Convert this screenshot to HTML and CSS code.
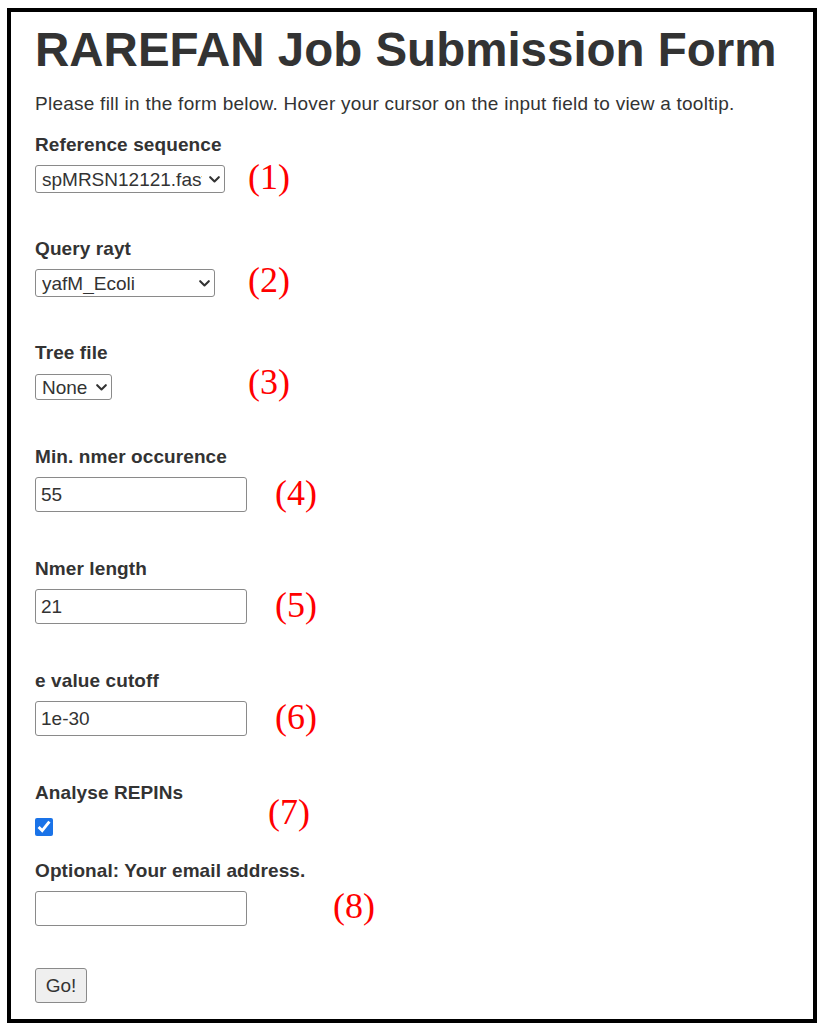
FILE: index.html
```html
<!DOCTYPE html>
<html lang="en">
<head>
<meta charset="utf-8">
<title>RAREFAN Job Submission Form</title>
<link rel="stylesheet" href="styles.css">
</head>
<body>
<div class="frame">
  <h1 class="title">RAREFAN Job Submission Form</h1>
  <p class="intro">Please fill in the form below. Hover your cursor on the input field to view a tooltip.</p>
  <form class="form">
    <div class="field field-select">
      <label class="label">Reference sequence</label>
      <div class="row">
        <span class="select-wrap select-ref">
          <select class="select"><option>spMRSN12121.fasta</option></select>
          <svg class="chev" width="11" height="7" viewBox="0 0 11 7"><path d="M1.2 1.2 L5.5 5.4 L9.8 1.2" fill="none" stroke="#333" stroke-width="2.1" stroke-linecap="round" stroke-linejoin="round"/></svg>
        </span>
        <span class="note note-1">(1)</span>
      </div>
    </div>
    <div class="field field-select">
      <label class="label">Query rayt</label>
      <div class="row">
        <span class="select-wrap select-query">
          <select class="select"><option>yafM_Ecoli</option></select>
          <svg class="chev" width="11" height="7" viewBox="0 0 11 7"><path d="M1.2 1.2 L5.5 5.4 L9.8 1.2" fill="none" stroke="#333" stroke-width="2.1" stroke-linecap="round" stroke-linejoin="round"/></svg>
        </span>
        <span class="note note-2">(2)</span>
      </div>
    </div>
    <div class="field field-select">
      <label class="label">Tree file</label>
      <div class="row">
        <span class="select-wrap select-tree">
          <select class="select"><option>None</option></select>
          <svg class="chev" width="11" height="7" viewBox="0 0 11 7"><path d="M1.2 1.2 L5.5 5.4 L9.8 1.2" fill="none" stroke="#333" stroke-width="2.1" stroke-linecap="round" stroke-linejoin="round"/></svg>
        </span>
        <span class="note note-3">(3)</span>
      </div>
    </div>
    <div class="field field-input">
      <label class="label">Min. nmer occurence</label>
      <div class="row row-input">
        <input class="text" type="text" value="55">
        <span class="note note-4">(4)</span>
      </div>
    </div>
    <div class="field field-input">
      <label class="label">Nmer length</label>
      <div class="row row-input">
        <input class="text" type="text" value="21">
        <span class="note note-5">(5)</span>
      </div>
    </div>
    <div class="field field-input">
      <label class="label">e value cutoff</label>
      <div class="row row-input">
        <input class="text" type="text" value="1e-30">
        <span class="note note-6">(6)</span>
      </div>
    </div>
    <div class="field field-check">
      <label class="label">Analyse REPINs</label>
      <div class="row row-check">
        <input class="check" type="checkbox" checked>
        <span class="note note-7">(7)</span>
      </div>
    </div>
    <div class="field field-email">
      <label class="label">Optional: Your email address.</label>
      <div class="row row-input">
        <input class="text" type="text" value="">
        <span class="note note-8">(8)</span>
      </div>
    </div>
    <button class="go" type="button">Go!</button>
  </form>
</div>
</body>
</html>
```

FILE: styles.css
```css
html, body {
  margin: 0;
  padding: 0;
  background: #ffffff;
}

body {
  font-family: "Liberation Sans", Arial, Helvetica, sans-serif;
  color: #333333;
}

.frame {
  box-sizing: border-box;
  margin: 8px 0 0 7px;
  width: 810px;
  height: 1015px;
  border: 4px solid #000000;
  padding: 11px 0 0 24px;
}

.title {
  margin: 0;
  font-size: 47.5px;
  line-height: 54px;
  font-weight: bold;
  color: #333333;
}

.intro {
  margin: 16px 0 0 0;
  font-size: 19px;
  line-height: 22px;
  letter-spacing: 0.25px;
}

.form {
  display: flex;
  flex-direction: column;
  align-items: flex-start;
  margin-top: 19px;
}

.field {
  display: flex;
  flex-direction: column;
  align-items: flex-start;
}

.field-select { margin-bottom: 45px; }
.field-input { margin-bottom: 46px; }
.field-check { margin-bottom: 24px; }
.field-email { margin-bottom: 42px; }

.label {
  display: block;
  font-size: 19px;
  line-height: 22px;
  font-weight: bold;
  letter-spacing: 0.1px;
  color: #333333;
  margin-bottom: 9px;
}

.row {
  display: flex;
  align-items: center;
  height: 28px;
}

.row-input { height: 35px; }
.row-check { height: 18px; margin-top: 5px; }

.select-wrap {
  position: relative;
  display: inline-flex;
  height: 28px;
}

.select {
  box-sizing: border-box;
  width: 100%;
  height: 100%;
  margin: 0;
  padding: 0 22px 0 6px;
  -webkit-appearance: none;
  appearance: none;
  font-family: "Liberation Sans", Arial, Helvetica, sans-serif;
  font-size: 19px;
  color: #333333;
  background: #ffffff;
  border: 1px solid #8a8a8a;
  border-radius: 3px;
}

.chev {
  position: absolute;
  right: 5px;
  top: 50%;
  margin-top: -3px;
  pointer-events: none;
}

.select-ref { width: 190px; }
.select-query { width: 180px; }
.select-tree { width: 77px; height: 26px; }

.text {
  box-sizing: border-box;
  width: 212px;
  height: 35px;
  margin: 0;
  padding: 0 5px;
  font-family: "Liberation Sans", Arial, Helvetica, sans-serif;
  font-size: 19px;
  color: #333333;
  background: #ffffff;
  border: 1px solid #8a8a8a;
  border-radius: 3px;
}

.check {
  width: 18px;
  height: 18px;
  margin: 0;
  accent-color: #1a73e8;
}

.note {
  font-family: "Liberation Serif", "Times New Roman", serif;
  font-size: 36px;
  line-height: 36px;
  color: #ff0000;
  white-space: nowrap;
}

.note-1 { margin-left: 23px; transform: translateY(-2px); }
.note-2 { margin-left: 33px; transform: translateY(-3px); }
.note-3 { margin-left: 136px; transform: translateY(-5px); }
.note-4 { margin-left: 28px; transform: translateY(-2px); }
.note-5 { margin-left: 28px; transform: translateY(-2px); }
.note-6 { margin-left: 28px; transform: translateY(-2px); }
.note-7 { margin-left: 215px; transform: translateY(-15px); }
.note-8 { margin-left: 86px; transform: translateY(-3px); }

.go {
  box-sizing: border-box;
  width: 52px;
  height: 35px;
  margin: 0;
  padding: 0;
  font-family: "Liberation Sans", Arial, Helvetica, sans-serif;
  font-size: 19px;
  color: #333333;
  background: #efefef;
  border: 1px solid #8a8a8a;
  border-radius: 3px;
}
```
